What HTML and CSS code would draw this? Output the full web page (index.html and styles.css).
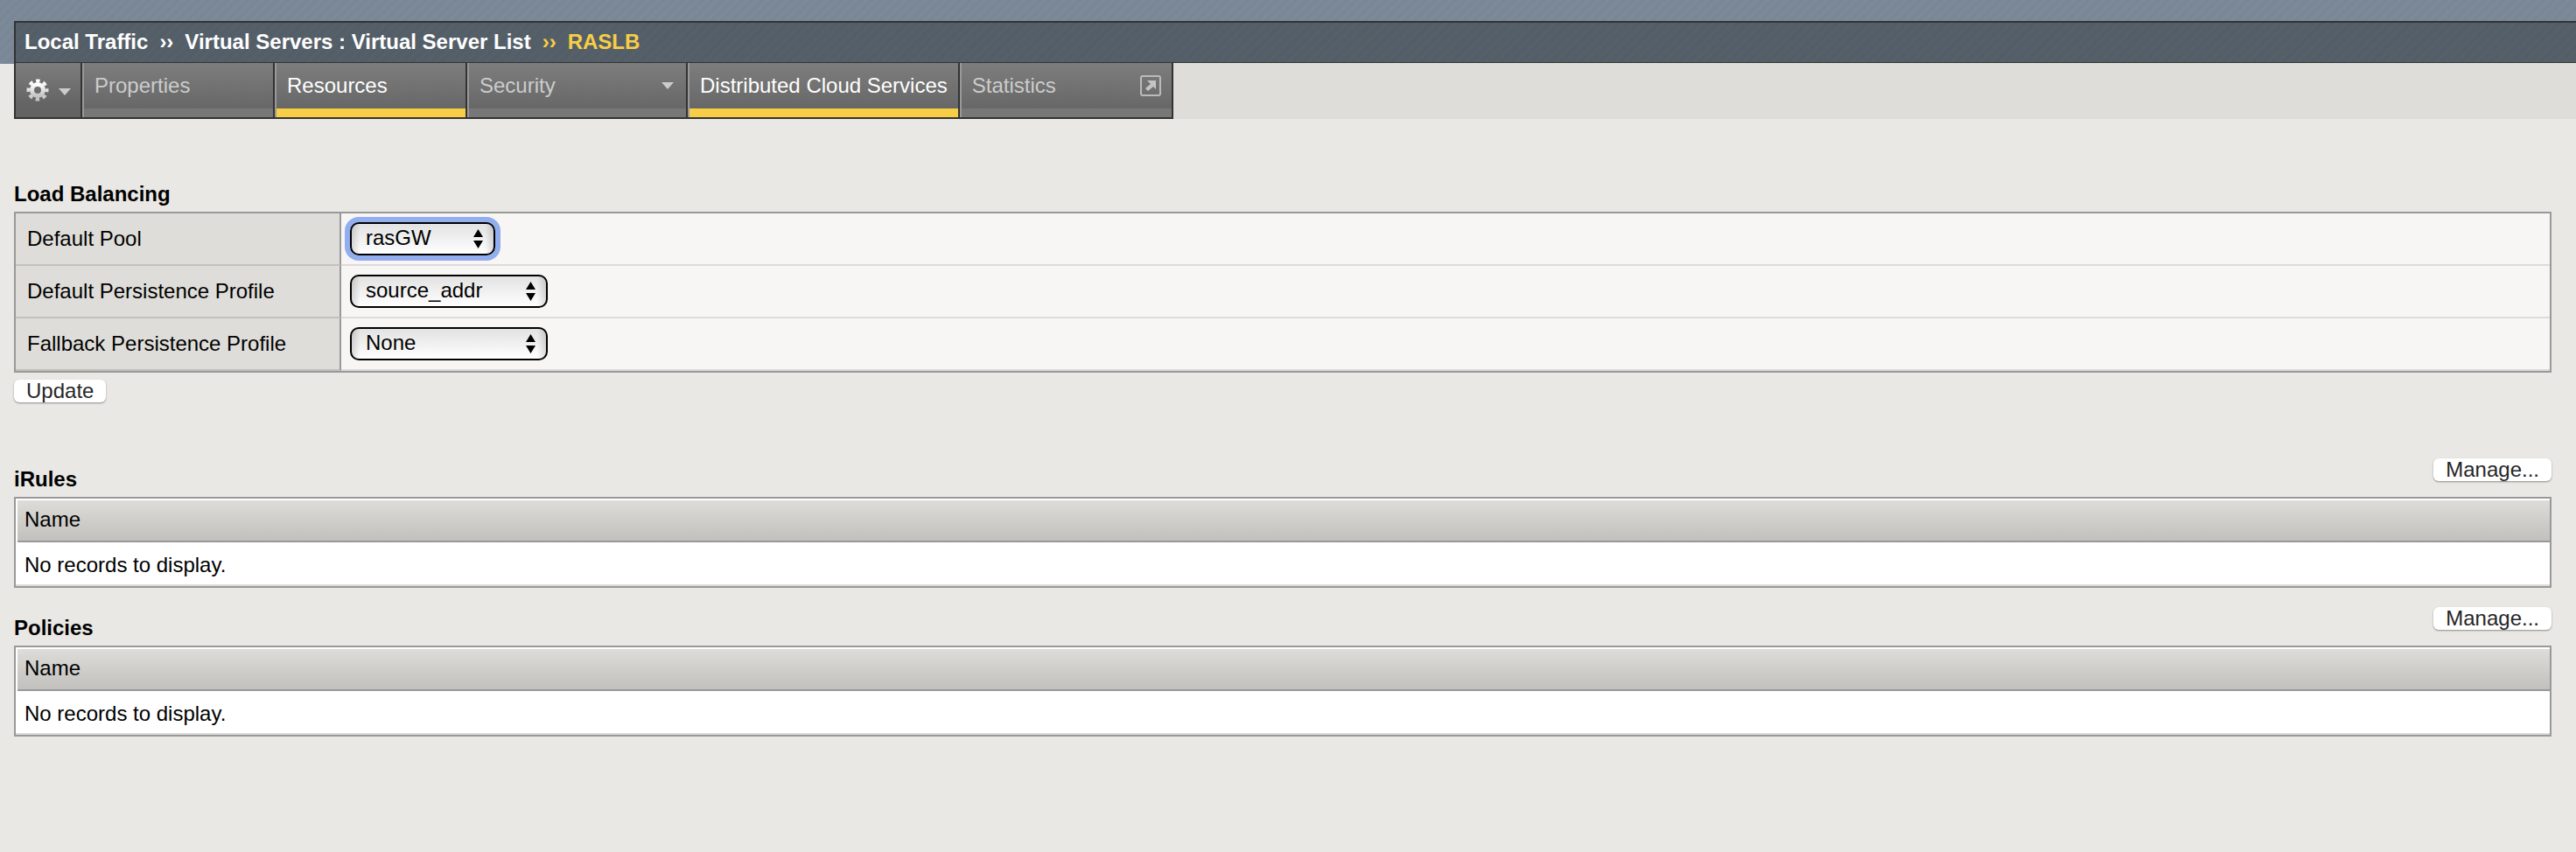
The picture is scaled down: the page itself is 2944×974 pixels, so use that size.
FILE: index.html
```
<!DOCTYPE html>
<html lang="en">
<head>
    <meta charset="UTF-8">
    <meta name="viewport" content="width=device-width, initial-scale=1.0">
    <title>Local Traffic - Virtual Server List - RASLB</title>
    <link rel="stylesheet" href="styles.css">
</head>
<body>
    <header class="banner">
        <div class="page-header">
            <h1 class="breadcrumb">
                <span>Local Traffic</span>
                <span>&rsaquo;&rsaquo;</span>
                <span>Virtual Servers : Virtual Server List</span>
                <span class="current">&rsaquo;&rsaquo;</span>
                <span class="current">RASLB</span>
            </h1>
            <nav class="tab-bar">
                <div class="tabs">
                    <button type="button" class="gear" aria-label="Options">
                        <svg width="26" height="26" viewBox="0 0 26 26">
                            <defs>
                                <linearGradient id="gearFill" x1="0" y1="0" x2="0" y2="1">
                                    <stop offset="0" stop-color="#fff"/>
                                    <stop offset="1" stop-color="#c4c4c4"/>
                                </linearGradient>
                            </defs>
                            <g fill="none" stroke="url(#gearFill)">
                                <circle cx="13" cy="13" r="6.5" stroke-width="5"/>
                                <circle cx="13" cy="13" r="10.5" stroke-width="4" stroke-dasharray="4.4 3.85" stroke-dashoffset="2.2"/>
                            </g>
                        </svg>
                        <svg width="14" height="8" viewBox="0 0 14 8"><path d="M0 0h14L7 8z" fill="#ccc"/></svg>
                    </button>
                    <a href="#" class="tab">Properties</a>
                    <a href="#" class="tab active">Resources</a>
                    <a href="#" class="tab tab-menu">Security
                        <svg width="14" height="8" viewBox="0 0 14 8"><path d="M0 0h14L7 8z" fill="#ccc"/></svg>
                    </a>
                    <a href="#" class="tab active">Distributed Cloud Services</a>
                    <a href="#" class="tab tab-link">Statistics
                        <svg width="24" height="24" viewBox="0 0 24 24">
                            <rect x="1" y="1" width="22" height="22" rx="2" fill="none" stroke="#bbb" stroke-width="2"/>
                            <path d="M8 6h10v10l-3-3-6 5-3-3 6-5z" fill="#c4c4c4"/>
                        </svg>
                    </a>
                </div>
            </nav>
        </div>
    </header>

    <main>
        <form class="load-balancing">
            <h2>Load Balancing</h2>
            <table class="settings">
                <tr>
                    <th scope="row"><label for="pool">Default Pool</label></th>
                    <td><select id="pool" class="small focused"><option>rasGW</option></select></td>
                </tr>
                <tr>
                    <th scope="row"><label for="persistence">Default Persistence Profile</label></th>
                    <td><select id="persistence"><option>source_addr</option></select></td>
                </tr>
                <tr>
                    <th scope="row"><label for="fallback">Fallback Persistence Profile</label></th>
                    <td><select id="fallback"><option>None</option></select></td>
                </tr>
            </table>
            <button type="button" class="btn">Update</button>
        </form>

        <section>
            <div class="section-head">
                <h2>iRules</h2>
                <button type="button" class="btn">Manage...</button>
            </div>
            <table class="list">
                <thead><tr><th scope="col">Name</th></tr></thead>
                <tbody><tr><td>No records to display.</td></tr></tbody>
            </table>
        </section>

        <section>
            <div class="section-head">
                <h2>Policies</h2>
                <button type="button" class="btn">Manage...</button>
            </div>
            <table class="list">
                <thead><tr><th scope="col">Name</th></tr></thead>
                <tbody><tr><td>No records to display.</td></tr></tbody>
            </table>
        </section>
    </main>
</body>
</html>
```
FILE: styles.css
```
* {
    box-sizing: border-box;
}

body {
    margin: 0;
    background-color: #e9e8e4;
    color: #000;
    font-family: "Liberation Sans", Arial, sans-serif;
    font-size: 24px;
    line-height: 28px;
}

h1, h2 {
    margin: 0;
    font-size: 24px;
    font-weight: bold;
}

button, select {
    font-family: inherit;
    font-size: 24px;
}

/* header */
.banner {
    padding: 24px 0 0 16px;
    background: repeating-linear-gradient(135deg, #788696, #7d8a99 4px, #788696 8px) no-repeat;
    background-size: 100% 73px;
}

.breadcrumb {
    display: flex;
    gap: 13px;
    padding: 8px 10px 9px;
    border: solid #333;
    border-width: 2px 0 1px 2px;
    background: repeating-linear-gradient(135deg, #535d67, #566069 4px, #535d67 8px);
    color: #fff;
}

.current {
    color: #f8ce46;
}

.tab-bar {
    background-color: #deddd9;
}

.tabs {
    display: flex;
    width: max-content;
    border-left: 2px solid #333;
    border-bottom: 2px solid #333;
}

.gear {
    display: flex;
    align-items: center;
    gap: 11px;
    width: 76px;
    padding: 0 11px 0 12px;
    border: 0;
    border-right: 2px solid #333;
    background: linear-gradient(#7d7d7d, #636363 80%);
}

.gear svg:last-child {
    margin-top: 4px;
}

.tab {
    display: flex;
    justify-content: space-between;
    min-width: 220px;
    padding: 12px 12px 22px;
    border-left: 2px solid #999;
    border-right: 2px solid #333;
    background: linear-gradient(#7d7d7d, #636363);
    box-shadow: inset 0 -10px #777;
    color: #ccc;
    text-decoration: none;
}

.tab.active {
    box-shadow: inset 0 -10px #f8ce46;
    color: #fff;
}

.tab-menu {
    width: 252px;
    padding-right: 14px;
}

.tab-menu svg {
    margin-top: 10px;
}

.tab-link {
    width: 244px;
}

.tab-link svg {
    margin-top: 2px;
}

/* content */
main {
    padding: 72px 28px 0 16px;
}

table {
    width: 100%;
    border: 2px solid #999;
    border-spacing: 0;
}

th, td {
    text-align: left;
    font-weight: normal;
}

.load-balancing {
    margin-bottom: 64px;
}

.load-balancing h2 {
    margin-bottom: 6px;
}

.settings th {
    width: 372px;
    height: 60px;
    padding: 0 13px;
    border-right: 2px solid #999;
    border-bottom: 2px solid #c2c1bd;
    background-color: #deddd9;
}

.settings td {
    padding: 0 10px;
    border-bottom: 2px solid #dddcda;
    background-color: #f7f6f4;
}

select {
    display: block;
    width: 226px;
    height: 38px;
    padding: 0 36px 3px 16px;
    border: 2px solid #000;
    border-radius: 10px;
    appearance: none;
    background:
        url("data:image/svg+xml,%3Csvg xmlns='http://www.w3.org/2000/svg' width='11' height='22'%3E%3Cpath d='M0 9h11L5.5 0zM0 13h11L5.5 22z'/%3E%3C/svg%3E") no-repeat right 12px center,
        linear-gradient(90deg, #0002, transparent 10px, transparent calc(100% - 10px), #0002),
        linear-gradient(#e2e2e2, #fff);
    color: #000;
}

select.small {
    width: 166px;
}

select.focused {
    box-shadow: 0 0 0 6px #92aef0;
}

.btn {
    display: block;
    height: 26px;
    padding: 0 14px;
    border: 0;
    border-radius: 6px;
    background-color: #fff;
    box-shadow: 0 1px 2px #0006;
    color: #262626;
    line-height: 26px;
}

.settings + .btn {
    margin-top: 8px;
}

.section-head {
    display: flex;
    justify-content: space-between;
    margin-bottom: 6px;
}

.section-head h2 {
    padding-top: 10px;
}

section + section {
    margin-top: 22px;
}

.list th {
    padding: 8px 8px 12px;
    border: solid #fff;
    border-width: 2px 0 0 2px;
    box-shadow: inset 0 -2px #999;
    background: linear-gradient(#dddcd8, #c0bfbb);
}

.list td {
    padding: 12px 10px 8px;
    border-bottom: 2px solid #dddcda;
    background-color: #fff;
}
```
